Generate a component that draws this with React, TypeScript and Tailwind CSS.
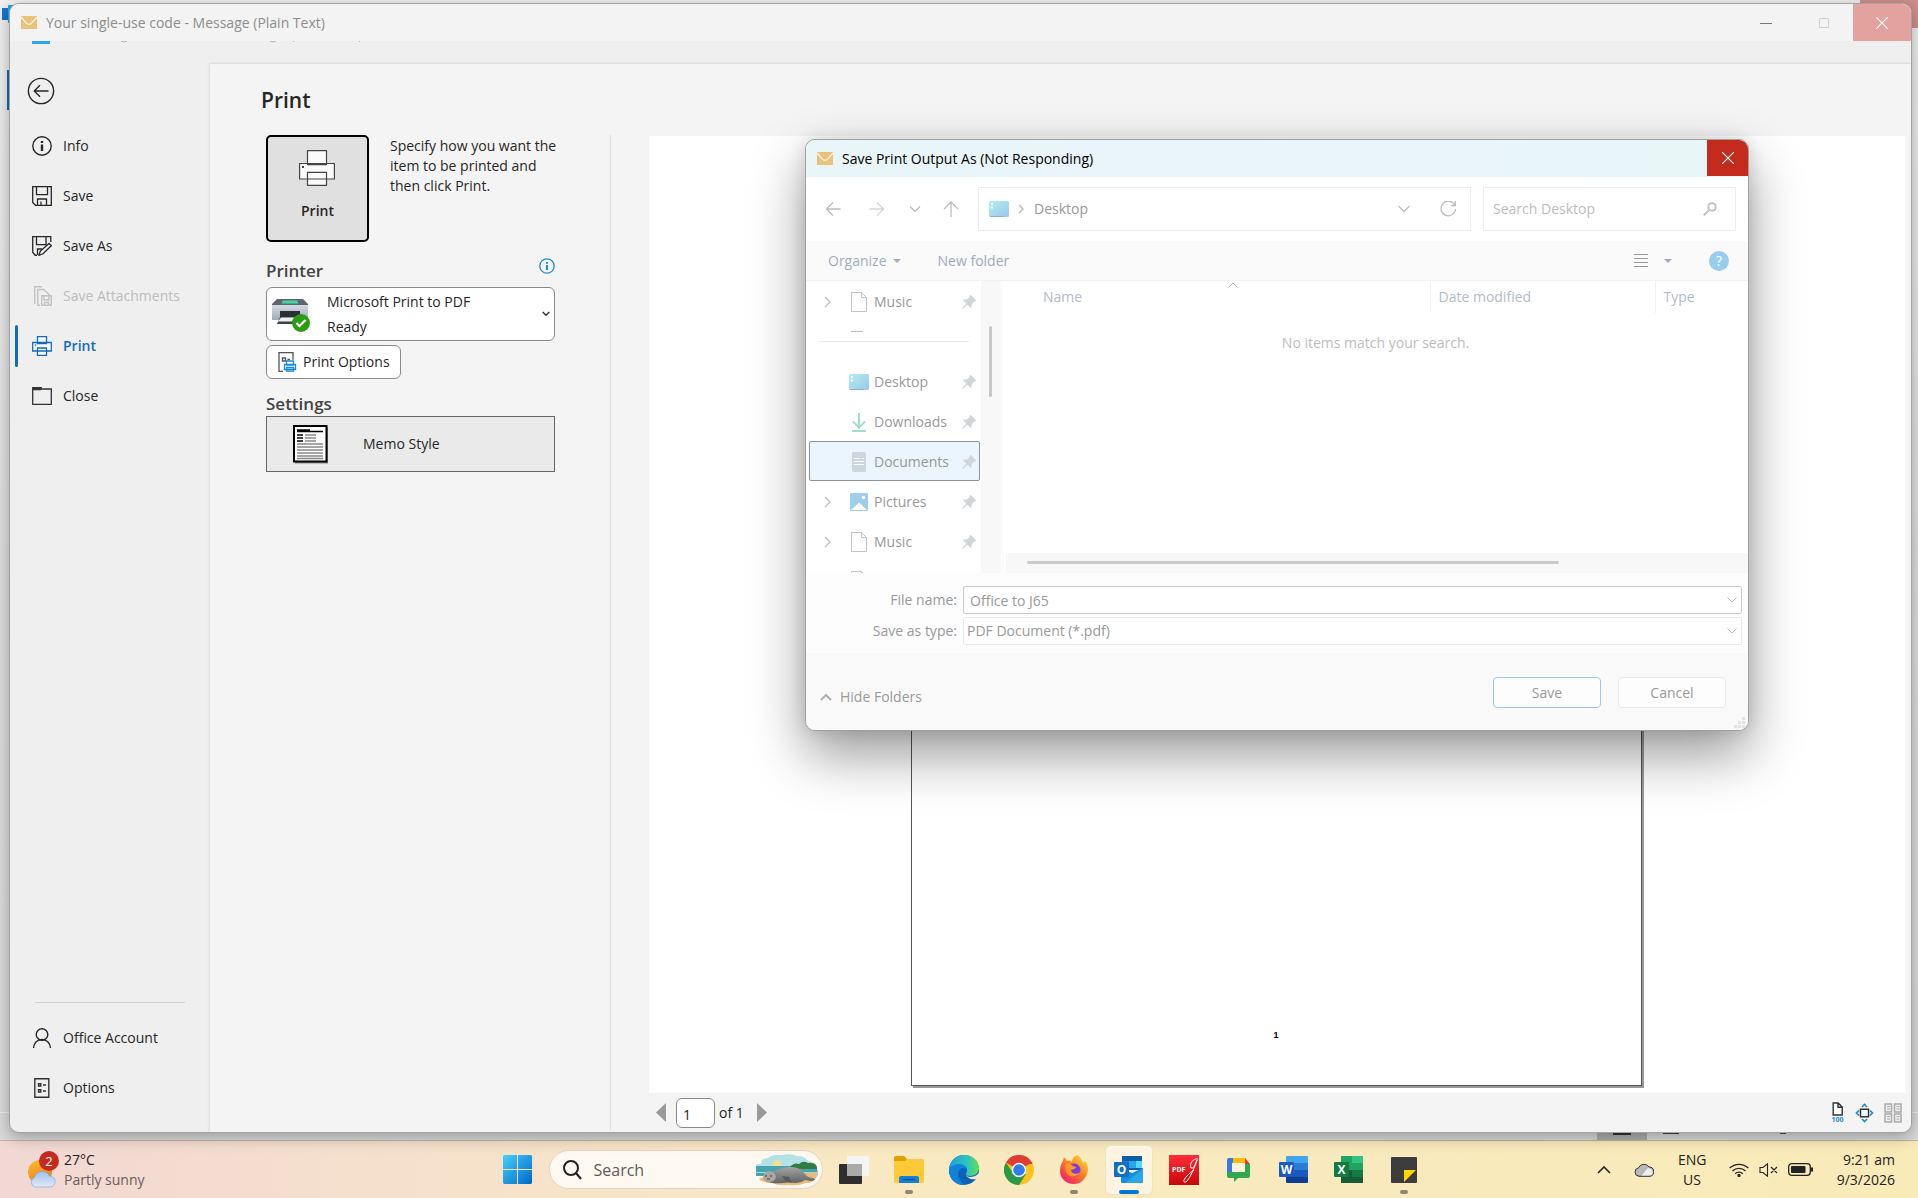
import type { ReactNode } from 'react';

const NAV_ITEMS = [
  { label: 'Info', icon: <InfoIcon /> },
  { label: 'Save', icon: <SaveIcon /> },
  { label: 'Save As', icon: <SaveAsIcon /> },
  { label: 'Save Attachments', icon: <SaveAttachmentsIcon />, disabled: true },
  { label: 'Print', icon: <PrinterIcon />, active: true },
  { label: 'Close', icon: <CloseFolderIcon /> },
];

const TREE_ITEMS = [
  { label: 'Desktop', icon: <DesktopIcon /> },
  { label: 'Downloads', icon: <DownloadsIcon /> },
  { label: 'Documents', icon: <DocumentsIcon />, selected: true },
  { label: 'Pictures', icon: <PicturesIcon />, expandable: true },
  { label: 'Music', icon: <FileIcon />, expandable: true },
];

const TASKBAR_APPS = [
  { label: 'Task View', icon: <TaskViewIcon /> },
  { label: 'File Explorer', icon: <ExplorerIcon />, running: true },
  { label: 'Edge', icon: <EdgeIcon /> },
  { label: 'Chrome', icon: <ChromeIcon /> },
  { label: 'Firefox', icon: <FirefoxIcon />, running: true },
  { label: 'Outlook', icon: <OutlookIcon />, focused: true },
  { label: 'PDF reader', icon: <PdfIcon /> },
  { label: 'Chat', icon: <ChatIcon /> },
  { label: 'Word', icon: <WordIcon /> },
  { label: 'Excel', icon: <ExcelIcon /> },
  { label: 'Sticky Notes', icon: <StickyIcon />, running: true },
];

export default function App() {
  return (
    <div className="relative flex h-screen flex-col overflow-hidden font-['Open_Sans','Noto_Sans',sans-serif] text-sm text-[#262626]">
      <div className="relative flex min-h-0 flex-1 bg-[#d9d9d9] pt-[3px] pr-[6px] pb-[7px] pl-[9px]">
        <BackgroundWindow />
        <main className="relative flex min-w-0 flex-1 flex-col overflow-hidden rounded-[10px] border border-[#a2a2a2] bg-[#efefef] shadow-[0_4px_16px_rgba(0,0,0,0.3)]">
          <TitleBar />
          <div className="flex min-h-0 flex-1">
            <Sidebar />
            <PrintPanel />
          </div>
        </main>
      </div>
      <SaveDialog />
      <Taskbar />
    </div>
  );
}

/* Slivers of the maximised window that sits behind the message */
function BackgroundWindow() {
  return (
    <div className="absolute inset-0 bg-linear-to-b from-[#f0f0f0] via-[#dedede] to-[#dadada]">
      <div className="absolute top-0 right-0 h-7 w-[58px] bg-[#cf8f8b]" />
      <div className="absolute top-2 left-[2px] h-3 w-3 bg-[#0f78d4]" />
      <div className="absolute top-[5px] left-2 h-[18px] w-2 bg-[#28a8ea]" />
      <div className="absolute top-[70px] left-[7px] h-10 w-1 bg-[#0f6cbd]" />
      <div className="absolute bottom-[27px] left-0 h-px w-full bg-[#f0f0f0]" />
      <div className="absolute right-[271px] bottom-0 h-8 w-[50px] bg-[#aeaeae]" />
      <div className="absolute right-[287px] bottom-[5px] h-2 w-[18px] bg-[#333]" />
      <div className="absolute right-[239px] bottom-[6px] h-2 w-4 bg-[#444]" />
      <div className="absolute right-[132px] bottom-[6px] h-2 w-[6px] bg-[#555]" />
    </div>
  );
}

function TitleBar() {
  return (
    <>
      <header className="flex h-[37px] shrink-0 items-center bg-[#f3f3f3] pl-[11px] text-[#8d8d8d]">
        <MailIcon />
        <span className="ml-[9px] flex-1">Your single-use code - Message (Plain Text)</span>
        <button aria-label="Minimize" className="flex h-full w-[58px] items-center justify-center">
          <svg width="12" height="12" fill="none" stroke="#777"><path d="M0 6.500h12" /></svg>
        </button>
        <button aria-label="Maximize" className="flex h-full w-[58px] items-center justify-center">
          <svg width="12" height="12" fill="none" stroke="#d0d0d0"><path d="M1.500 1.500h9v9h-9z" /></svg>
        </button>
        <button aria-label="Close" className="flex h-full w-[58px] items-center justify-center bg-[#e3a29d]">
          <CrossIcon />
        </button>
      </header>
      {/* leftover bottom edge of the old caption */}
      <svg width="360" height="3" className="ml-[22px] shrink-0" fill="none" stroke="#b5b5b5">
        <path d="M0 0h18v3H0z" fill="#28a8ea" stroke="none" />
        <path d="M89 0q3 2 6 0M238 0q3 2 6 0M261 0l1 1M328 0l-1 1" />
      </svg>
    </>
  );
}

function Sidebar() {
  return (
    <nav className="flex w-[200px] shrink-0 flex-col pt-[33px] text-[#262626]">
      <button aria-label="Back" className="ml-[17px] h-7 w-7">
        <svg width="28" height="28" fill="none" stroke="#262626" strokeWidth="1.4">
          <circle cx="14" cy="14" r="12.6" />
          <path d="M21.500 14H7.500M13 8.300 7.300 14l5.700 5.700" />
        </svg>
      </button>
      <div className="mt-4">
        {NAV_ITEMS.map(item => (
          <NavItem key={item.label} {...item} />
        ))}
      </div>
      <hr className="mt-auto mr-[25px] ml-[25px] border-[#d0d0d0]" />
      <div className="mt-[10px] mb-[19px]">
        <NavItem label="Office Account" icon={<AccountIcon />} />
        <NavItem label="Options" icon={<OptionsIcon />} />
      </div>
    </nav>
  );
}

function NavItem({ label, icon, active, disabled }: { label: string; icon: ReactNode; active?: boolean; disabled?: boolean }) {
  const tone = active ? 'font-semibold text-[#0f6cbd]' : disabled ? 'text-[#bdbdbd]' : '';
  return (
    <button disabled={disabled} className={`flex h-[50px] w-full items-center pl-[5px] ${tone}`}>
      <span className={`h-[42px] w-[3px] rounded-sm ${active ? 'bg-[#0f6cbd]' : ''}`} />
      <span className="ml-[14px]">{icon}</span>
      <span className="ml-[11px]">{label}</span>
    </button>
  );
}

function PrintPanel() {
  return (
    <section className="mt-5 flex min-w-0 flex-1 flex-col bg-[#f4f4f4] shadow-[0_0_3px_rgba(0,0,0,0.16)]">
      <h1 className="h-[71px] shrink-0 pt-[22px] pl-[51px] text-[21px] leading-7 font-semibold">Print</h1>
      <div className="flex min-h-0 flex-1">
        <div className="mb-[2px] w-[401px] shrink-0 border-r border-[#dcdcdc] pr-[55px] pl-14">
          <PrintSettings />
        </div>
        <Preview />
      </div>
    </section>
  );
}

function PrintSettings() {
  return (
    <>
      <div className="flex gap-[21px]">
        <button className="flex h-[107px] w-[103px] shrink-0 flex-col items-center rounded-[5px] border-2 border-black bg-[#e0e0e0] pt-[13px] font-semibold">
          <svg width="37" height="36" fill="#fafafa" stroke="#444" strokeWidth="1.2">
            <path d="M8.500.6h19v14h-19zM.6 13.500h34.800v15.500H.6zM8.500 22.400h19v13h-19z" />
            <path d="M3 16h2v2H3z" fill="#444" stroke="none" />
          </svg>
          <span className="mt-[15px] leading-5">Print</span>
        </button>
        <p className="w-[180px] pt-px leading-5 whitespace-nowrap">
          Specify how you want the<br />item to be printed and<br />then click Print.
        </p>
      </div>
      <div className="mt-4 mb-[3px] flex items-start justify-between">
        <h2 className="text-[17px] leading-[26px] font-semibold text-[#444]">Printer</h2>
        <button aria-label="Printer properties">
          <svg width="16" height="16" fill="none" stroke="#1a8ad6" strokeWidth="1.3">
            <circle cx="8" cy="8" r="7.200" />
            <path d="M8 7v5M8 4v1.800" strokeWidth="2" />
          </svg>
        </button>
      </div>
      <button aria-haspopup="listbox" className="flex h-[54px] w-full items-center rounded-md border border-[#8a8a8a] bg-white pl-[5px] text-left">
        <PrinterReadyIcon />
        <span className="ml-4 flex-1 leading-[25px]">Microsoft Print to PDF<br />Ready</span>
        <svg width="8" height="6" className="mr-1" fill="none" stroke="#333" strokeWidth="1.500"><path d="m.7 1 3.300 3.300L7.300 1" /></svg>
      </button>
      <button className="mt-1 flex h-[34px] w-[135px] items-center rounded-md border border-[#8a8a8a] bg-white pl-[11px] whitespace-nowrap">
        <PrintOptionsIcon />
        <span className="ml-[6px]">Print Options</span>
      </button>
      <h2 className="mt-3 -mb-px text-[17px] leading-[26px] font-semibold text-[#444]">Settings</h2>
      <button className="flex h-[56px] w-full items-center border border-[#666] bg-[#eaeaea] pl-[26px]">
        <MemoIcon />
        <span className="ml-[34px]">Memo Style</span>
      </button>
    </>
  );
}

function Preview() {
  return (
    <div className="mt-px mr-[5px] ml-[38px] flex min-w-0 flex-1 flex-col">
      <div className="flex min-h-0 flex-1 justify-center bg-white pt-2 pr-[3px] pb-[7px]">
        <div className="flex w-[731px] items-end justify-center border border-[#555] bg-white pb-11 font-['Liberation_Sans',sans-serif] text-[9px] leading-3 font-bold text-black shadow-[2px_2px_0_#999]">
          1
        </div>
      </div>
      <footer className="flex h-[39px] shrink-0 items-center pl-[7px]">
        <button aria-label="Previous page"><svg width="10" height="19" fill="#999"><path d="M10 0v19L0 9.500z" /></svg></button>
        <input aria-label="Page" defaultValue="1" className="ml-[10px] h-[30px] w-[39px] rounded-md border border-[#8a8a8a] bg-white pt-1 pl-[6px]" />
        <span className="ml-1">of 1</span>
        <button aria-label="Next page" className="ml-[13px]"><svg width="10" height="19" fill="#999"><path d="M0 0v19l10-9.500z" /></svg></button>
        <div className="mr-1 ml-auto flex items-center gap-[10px]">
          <button aria-label="Actual size">
            <svg width="14" height="22" fill="none" className="overflow-visible">
              <path d="M2.200 1h5l4 4v8h-9zM7 1v4.200h4" fill="#fafafa" stroke="#333" strokeWidth="1.400" />
              <text x="6.500" y="20" textAnchor="middle" className="text-[7px] font-bold" fill="#1a8ad6">100</text>
            </svg>
          </button>
          <button aria-label="One page">
            <svg width="19" height="20" fill="none" stroke="#1a8ad6" strokeWidth="1.700">
              <path d="M7 4 9.500 1.500 12 4M7 16l2.500 2.500L12 16M4 7.500 1.500 10 4 12.500M15 7.500l2.500 2.500-2.500 2.500" />
              <path d="M5.500 6.200h8v7.600h-8z" stroke="#333" strokeWidth="1.500" fill="#fafafa" />
            </svg>
          </button>
          <button aria-label="Multiple pages">
            <svg width="18" height="20" fill="#eee" stroke="#aaa" strokeWidth="1.500">
              <path d="M1 1h6.500v8H1zM10.500 1H17v8h-6.500zM1 11h6.500v8H1zM10.500 11H17v8h-6.500z" />
              <path d="M3 3.500h3M3 6h3M12.500 3.500h3M12.500 6h3M3 13.500h3M3 16h3M12.500 13.500h3M12.500 16h3" strokeWidth="1" />
            </svg>
          </button>
        </div>
      </footer>
    </div>
  );
}

/* ---------- Save dialog ---------- */

function SaveDialog() {
  return (
    <div
      role="dialog"
      aria-label="Save Print Output As"
      className="absolute top-[139px] left-[805px] flex w-[944px] flex-col overflow-hidden rounded-[10px] border border-[#a0a0a0] bg-white text-[#999] shadow-[0_24px_54px_rgba(0,0,0,0.4),0_0_16px_rgba(0,0,0,0.12)]"
    >
      <div className="flex h-[37px] items-center bg-linear-to-r from-[#e8f6f7] via-[#e9f4fb] to-[#e8f6f7] pl-[11px] text-black">
        <MailIcon />
        <span className="ml-[9px] flex-1">Save Print Output As (Not Responding)</span>
        <button aria-label="Close" className="flex h-9 w-[41px] items-center justify-center self-start bg-[#c42b1c]">
          <CrossIcon />
        </button>
      </div>

      <div className="flex h-16 items-center bg-white pr-3 pl-[5px]">
        <ToolButton label="Back" className="w-11"><path d="M15.500 8H1.500M8 1.500 1.500 8 8 14.500" /></ToolButton>
        <ToolButton label="Forward" className="w-11 opacity-60"><path d="M.5 8h14M8 1.500 14.500 8 8 14.500" /></ToolButton>
        <ToolButton label="Recent locations" className="w-8"><path d="m3 5.500 5 5 5-5" /></ToolButton>
        <ToolButton label="Up" className="w-10"><path d="M8 16V1.500M1 8l7-7 7 7" /></ToolButton>
        <div className="ml-[7px] flex h-[44px] flex-1 items-center border border-[#ededed] pl-[10px]">
          <DesktopIcon />
          <svg width="6" height="10" className="ml-[9px]" fill="none" stroke="#bbb" strokeWidth="1.500"><path d="m1 1 4 4-4 4" /></svg>
          <span className="ml-[10px] flex-1">Desktop</span>
          <ToolButton label="Previous locations" className="w-11"><path d="m2.500 5 5.500 5.500L13.500 5" /></ToolButton>
          <ToolButton label="Refresh" className="w-11"><path d="M15 4.500A7.300 7.300 0 1 0 15.600 8M15.300 0v4.700h-4.500" /></ToolButton>
        </div>
        <div className="ml-3 flex h-[44px] w-[253px] items-center border border-[#ededed] pr-[18px] pl-[9px]">
          <input aria-label="Search Desktop" placeholder="Search Desktop" className="min-w-0 flex-1 bg-transparent placeholder:text-[#bdbdbd]" />
          <svg width="14" height="14" fill="none" stroke="#c4c4c4" strokeWidth="2"><circle cx="9" cy="5" r="3.800" /><path d="M6 8 .8 13.200" /></svg>
        </div>
      </div>

      <div className="flex h-10 items-center border-b border-[#f2f2f2] bg-[#fafafa] pt-px pr-[19px] pl-[22px] text-[#a3abba]">
        <button className="flex items-center gap-[6px]">Organize<Triangle /></button>
        <button className="ml-[37px]">New folder</button>
        <button aria-label="View" className="ml-auto flex items-center gap-4">
          <svg width="14" height="14" stroke="#999"><path d="M0 .5h14M0 4.500h14M0 8.500h14M0 12.500h14" /></svg>
          <Triangle />
        </button>
        <button aria-label="Help" className="ml-[37px] flex h-5 w-5 items-center justify-center rounded-full bg-[#99cdef] text-white">?</button>
      </div>

      <div className="flex h-[292px]">
        <div className="w-[175px] shrink-0 overflow-hidden">
          <TreeRow label="Music" icon={<FileIcon />} expandable />
          {/* cut-off row above the separator */}
          <div className="h-10 pt-[10px]">
            <div className="ml-[45px] h-px w-3 bg-[#bbb]" />
            <hr className="mt-[9px] mr-3 ml-[13px] border-[#ebebeb]" />
          </div>
          {TREE_ITEMS.map(item => (
            <TreeRow key={item.label} {...item} />
          ))}
          <div className="pt-[10px] pl-[45px]"><FileIcon /></div>
        </div>
        <div className="w-5 shrink-0 bg-[#f8f8f8] pt-[45px]">
          <div className="ml-2 h-[71px] w-[3px] rounded-full bg-[#c8c8c8]" />
        </div>
        <div className="ml-px flex min-w-0 flex-1 flex-col border-l border-[#fafafa]">
          <table className="w-full table-fixed text-left text-[#b3bbc6]">
            <thead>
              <tr className="h-8">
                <th className="relative w-[427px] border-r border-[#f0f0f0] pl-10 font-normal">
                  <svg width="10" height="6" className="absolute top-px left-[225px]" fill="none" stroke="#bbb"><path d="m.5 5.500 4.500-4.500 4.500 4.500" /></svg>
                  Name
                </th>
                <th className="w-[225px] border-r border-[#f0f0f0] pl-2 font-normal">Date modified</th>
                <th className="pl-2 font-normal">Type</th>
              </tr>
            </thead>
            <tbody>
              <tr>
                <td colSpan={3} className="h-[60px] text-center text-[#bdbdbd]">No items match your search.</td>
              </tr>
            </tbody>
          </table>
          <div className="mt-auto ml-[3px] h-5 bg-[#f8f8f8] pt-2 pr-[189px] pl-[21px]">
            <div className="h-[3px] rounded-full bg-[#cbcbcb]" />
          </div>
        </div>
      </div>

      <div className="grid grid-cols-[151px_1fr] items-center gap-x-[6px] gap-y-[3px] bg-[#fdfdfd] pt-[13px] pr-[6px] pb-2">
        <label htmlFor="file-name" className="text-right">File name:</label>
        <div className="relative">
          <input id="file-name" defaultValue="Office to J65" className="h-7 w-full rounded-[2px] border border-[#cbcbcb] bg-white pl-[6px]" />
          <FieldChevron />
        </div>
        <label htmlFor="save-type" className="text-right">Save as type:</label>
        <div className="relative">
          <select id="save-type" className="h-7 w-full appearance-none rounded-[2px] border border-[#e8e8e8] bg-white pl-[3px]">
            <option>PDF Document (*.pdf)</option>
          </select>
          <FieldChevron />
        </div>
      </div>

      <div className="relative flex h-[77px] items-start bg-[#f9f9f9] pt-6 pr-[22px] pl-[14px]">
        <button className="flex h-10 items-center gap-2">
          <svg width="12" height="8" fill="none" stroke="#b0b0b0" strokeWidth="2"><path d="m1 7 5-5 5 5" /></svg>
          Hide Folders
        </button>
        <button className="ml-auto h-[31px] w-[108px] rounded-[4px] border border-[#99c9ec] bg-[#fdfdfd]">Save</button>
        <button className="ml-[17px] h-[31px] w-[108px] rounded-[4px] border border-[#ebebeb] bg-[#fdfdfd]">Cancel</button>
        <svg width="11" height="11" className="absolute right-[3px] bottom-[2px]" fill="#e2e2e2">
          <path d="M8 0h3v3H8zM4 4h3v3H4zM8 4h3v3H8zM0 8h3v3H0zM4 8h3v3H4zM8 8h3v3H8z" />
        </svg>
      </div>
    </div>
  );
}

function TreeRow({ label, icon, expandable, selected }: { label: string; icon: ReactNode; expandable?: boolean; selected?: boolean }) {
  return (
    <button className={`ml-[3px] flex h-10 w-[171px] items-center rounded-[2px] border pt-px ${selected ? 'border-[#8d9399] bg-[#eaf5fe]' : 'border-transparent'}`}>
      <span className="flex w-[35px] justify-center">
        {expandable && <svg width="7" height="12" fill="none" stroke="#c4c4c4" strokeWidth="1.500"><path d="m1 1 5 5-5 5" /></svg>}
      </span>
      <span className="ml-[3px] flex w-[22px] justify-center">{icon}</span>
      <span className="ml-1 flex-1 text-left">{label}</span>
      <svg width="14" height="14" className="mr-[3px]" fill="#cfd5d8" stroke="#cfd5d8"><path d="M8.500.8 13.300 5.500 11.500 6.200 9 9 8.700 12 2 5.200 5 5 8 2.700zM5.500 8.500 .5 13.500" strokeWidth="1.300" /></svg>
    </button>
  );
}

function ToolButton({ label, className, children }: { label: string; className: string; children: ReactNode }) {
  return (
    <button aria-label={label} className={`flex justify-center ${className}`}>
      <svg width="16" height="16" fill="none" stroke="#bdbdbd" strokeWidth="1.300">{children}</svg>
    </button>
  );
}

function FieldChevron() {
  return (
    <svg width="10" height="6" className="pointer-events-none absolute top-[11px] right-[5px]" fill="none" stroke="#bbb">
      <path d="m.5.500 4.500 4.500L9.500.500" />
    </svg>
  );
}

function Triangle() {
  return <svg width="8" height="4" fill="#a3abba"><path d="M0 0h8L4 4z" /></svg>;
}

function CrossIcon() {
  return <svg width="12" height="12" stroke="#fff" strokeWidth="1.100"><path d="m0 0 12 12M12 0 0 12" /></svg>;
}

/* ---------- Taskbar ---------- */

function Taskbar() {
  return (
    <footer className="grid h-[58px] shrink-0 grid-cols-[1fr_auto_1fr] border-t border-[#c9b3a4] bg-linear-to-r from-[#f2d8d4] from-0% via-[#f9e9c2] via-45% to-[#f9ebb8] pl-[3px] text-[#222]">
      <button className="flex items-center pl-[25px] text-left">
        <WeatherIcon />
        <span className="ml-1 leading-5">27°C<br /><span className="text-[#6b5d5b]">Partly sunny</span></span>
      </button>
      <div className="flex items-center">
        <button aria-label="Start" className="flex w-[55px] justify-center"><StartIcon /></button>
        <div className="mx-1 flex h-[39px] w-[274px] items-center rounded-full border border-[#e4d4c4] bg-[#fdf8f0] pr-1 pl-[13px]">
          <svg width="19" height="20" fill="none" stroke="#222" strokeWidth="2"><circle cx="8" cy="8" r="7" /><path d="m13 13 5 6" /></svg>
          <input aria-label="Search" placeholder="Search" className="ml-3 min-w-0 flex-1 bg-transparent text-base placeholder:text-[#5f5b58]" />
          <SealIcon />
        </div>
        {TASKBAR_APPS.map(app => (
          <TaskbarApp key={app.label} {...app} />
        ))}
      </div>
      <div className="flex items-center justify-end pr-[23px]">
        <button aria-label="Hidden icons"><svg width="14" height="8" fill="none" stroke="#222" strokeWidth="1.600"><path d="m1 7 6-6 6 6" /></svg></button>
        <button aria-label="OneDrive" className="ml-[23px]"><CloudIcon /></button>
        <button className="ml-6 w-7 text-center leading-5">ENG<br />US</button>
        <button aria-label="Network, volume and battery" className="ml-[23px] flex items-center gap-[10px]">
          <svg width="20" height="14" fill="none" stroke="#222" strokeWidth="1.300">
            <path d="M.7 5a13.500 13.500 0 0 1 18.600 0M3.500 8a9.500 9.500 0 0 1 13 0M6.200 10.700a5.500 5.500 0 0 1 7.600 0" />
            <circle cx="10" cy="12.500" r="1" fill="#222" />
          </svg>
          <svg width="19" height="14" fill="none" stroke="#222" strokeWidth="1.100">
            <path d="M1 4.500h3L8.500.8v12.400L4 9.500H1zM12 4l6 6M18 4l-6 6" />
          </svg>
          <svg width="25" height="13" fill="none" stroke="#222" strokeWidth="1.300">
            <rect x=".7" y=".7" width="21.600" height="11.600" rx="3" />
            <path d="M24 4.500v4" strokeWidth="2" />
            <rect x="3" y="3" width="14.500" height="7" rx="1" fill="#222" stroke="none" />
          </svg>
        </button>
        <button className="ml-5 w-[62px] text-right leading-5 whitespace-nowrap">9:21 am<br />9/3/2026</button>
      </div>
    </footer>
  );
}

function TaskbarApp({ label, icon, running, focused }: { label: string; icon: ReactNode; running?: boolean; focused?: boolean }) {
  return (
    <button aria-label={label} className="flex w-[55px] justify-center">
      <span className={`relative flex h-[50px] w-12 items-center justify-center rounded-md ${focused ? 'border border-[#f1e2c0] bg-[#fdf5e2]' : ''}`}>
        {icon}
        {running && <span className="absolute bottom-px h-1 w-2 rounded-full bg-[#8f8671]" />}
        {focused && <span className="absolute bottom-0 h-1 w-5 rounded-full bg-[#0078d4]" />}
      </span>
    </button>
  );
}

/* ---------- Icons ---------- */

function MailIcon() {
  return (
    <svg width="16" height="13" fill="#ecc17e"><path d="M0 0h16v13H0z" /><path d="m0 1 5.500 6.200q2.500 2.200 5 0L16 1" fill="none" stroke="#fbf3e3" strokeWidth="1.200" /></svg>
  );
}

function InfoIcon() {
  return (
    <svg width="20" height="20" fill="none" stroke="#262626" strokeWidth="1.400"><circle cx="10" cy="10" r="9.200" /><path d="M10 8.500V15M10 5v2" strokeWidth="2.400" /></svg>
  );
}

function SaveIcon() {
  return (
    <svg width="20" height="20" fill="none" stroke="#262626" strokeWidth="1.300"><path d="M.7.7h18.600v18.600H3.500L.7 16.500zM4.500.7v8h11v-8M5.500 19v-6h9v6M9 15.500V19" /></svg>
  );
}

function SaveAsIcon() {
  return (
    <svg width="20" height="20" fill="none" stroke="#262626" strokeWidth="1.300">
      <path d="M18.800 6V.7H.7v15.800l2.800 2.800M4.500.7v8h9.500v-8M5.500 19v-6H10" />
      <path d="m7 19.300 1.200-4L17 7.500l2.300 2.300-8.300 8zM2.500 19.300H5" />
    </svg>
  );
}

function SaveAttachmentsIcon() {
  return (
    <svg width="20" height="20" fill="none" stroke="#c4c4c4" strokeWidth="1.400">
      <path d="M10 .7H2.700V18M8 19.300H5.700V3.500h6L17.500 9" />
      <path d="M9.700 9.700h9.600v9.600H9.700zM12 10v4h5v-4M12.500 19v-2.500h4V19" />
    </svg>
  );
}

function PrinterIcon() {
  return (
    <svg width="20" height="20" fill="#fff" stroke="#0f6cbd" strokeWidth="1.300"><path d="M5.500.7h9v7h-9zM.7 6.500h18.600v8.500H.7zM5.500 12h9v7.300h-9z" /><path d="M2.800 9h1.500" /></svg>
  );
}

function CloseFolderIcon() {
  return (
    <svg width="20" height="20" fill="none" stroke="#333" strokeWidth="1.300"><path d="M.7 3h18.600v15.300H.7zM.7 3.700H8.500L9.500 2M.7 3V1.700h8.500V3" /></svg>
  );
}

function AccountIcon() {
  return (
    <svg width="20" height="20" fill="none" stroke="#262626" strokeWidth="1.400"><circle cx="10" cy="6.500" r="5.800" /><path d="M1.500 20a8.500 8.500 0 0 1 17 0" /></svg>
  );
}

function OptionsIcon() {
  return (
    <svg width="20" height="20" fill="none" stroke="#333" strokeWidth="1.400"><path d="M2.800.7h14v18.600h-14z" /><path d="M6.500 5.700h2.300V8H6.500zM6.500 11.700h2.300V14H6.500zM11 7h3M11 13h3" /></svg>
  );
}

function PrinterReadyIcon() {
  return (
    <svg width="39" height="36" viewBox="0 -2 39 36">
      <defs>
        <linearGradient id="body" x2="0" y2="1"><stop stopColor="#d3dae2" /><stop offset="1" stopColor="#9faab8" /></linearGradient>
      </defs>
      <path d="M5 1h26l5 5v2H0V6z" fill="#5f666d" />
      <path d="M11 2.500h14l1.500 3h-17z" fill="#43d9a0" />
      <path d="M0 7h36v15H0z" fill="url(#body)" />
      <path d="M8 13h20v7H8z" fill="#2c3034" />
      <path d="m8 19 20 0 2 7H5z" fill="#3c4146" />
      <path d="m9 19.500 15 0-2 4H6z" fill="#eef1f4" />
      <circle cx="29" cy="25" r="9" fill="#2b9c14" />
      <path d="m24.500 25 3 3 6-6" fill="none" stroke="#fff" strokeWidth="2.200" />
    </svg>
  );
}

function PrintOptionsIcon() {
  return (
    <svg width="19" height="20" fill="none" stroke="#555" strokeWidth="1.300">
      <path d="M5 19.300H1V.7h14v7M4.500 6h3v3h-3zM9.500 7.500H12" />
      <path d="M8.500 9h7v4h-7zM6.500 12.500h11v5h-11zM8.500 15.500h7v3.700h-7z" fill="#fff" stroke="#1a8ad6" />
    </svg>
  );
}

function MemoIcon() {
  return (
    <svg width="36" height="39" fill="none">
      <path d="M2 2h33v36.500H2z" fill="#888" />
      <path d="M1 1h32.500v35.500H1z" fill="#fff" stroke="#000" strokeWidth="2" />
      <path d="M4 5h13M4 6.500h26" stroke="#000" strokeWidth="1.500" />
      <path d="M4 10h6M4 13h6M4 16h6" stroke="#000" strokeWidth="1.500" />
      <path d="M12 10h11M12 13h11M12 16h11M4 19h26M4 22h26M4 25h26M4 28h26M4 31h26M4 33.500h26" stroke="#888" strokeWidth="1.400" />
    </svg>
  );
}

function DesktopIcon() {
  return (
    <svg width="20" height="16">
      <defs>
        <linearGradient id="desk" x2="1" y2="1"><stop stopColor="#b0f0f2" /><stop offset="1" stopColor="#9cc6ea" /></linearGradient>
      </defs>
      <rect width="20" height="16" rx="1.500" fill="url(#desk)" />
      <path d="M2 2h2v2H2zM2 5.500h2v2H2z" fill="#fff" />
      <path d="M1 15.500h14" stroke="#8fb3c9" />
    </svg>
  );
}

function DownloadsIcon() {
  return (
    <svg width="16" height="20" fill="none" stroke="#9fdfcb" strokeWidth="2"><path d="M8 1v14M2 9.500l6 6 6-6M1 19h14" /></svg>
  );
}

function DocumentsIcon() {
  return (
    <svg width="14" height="20"><rect width="14" height="20" rx="1.500" fill="#ccd6e2" /><path d="M2 6.500h6M2 9.500h10M2 12.500h10M9.500 6.500H12" stroke="#fff" /></svg>
  );
}

function PicturesIcon() {
  return (
    <svg width="18" height="18"><rect width="18" height="18" rx="1.500" fill="#9fcdec" /><path d="m1 17 8-7.500 8 7.500z" fill="#fff" /><circle cx="13.500" cy="4.500" r="1.700" fill="#fff" /></svg>
  );
}

function FileIcon() {
  return (
    <svg width="16" height="20" fill="#fdfdfd" stroke="#c4c4c4"><path d="M.5.500h10l5 5v14H.5zM10.500.500v5h5" /></svg>
  );
}

function WeatherIcon() {
  return (
    <svg width="32" height="38" viewBox="0 0 32 38">
      <defs>
        <linearGradient id="sun" x2="0.500" y2="1"><stop stopColor="#f4c430" /><stop offset="1" stopColor="#f27a1a" /></linearGradient>
        <linearGradient id="cloud" x2="0" y2="1"><stop stopColor="#9cc0f0" /><stop offset="1" stopColor="#dfeafa" /></linearGradient>
      </defs>
      <circle cx="12" cy="21" r="12" fill="url(#sun)" />
      <path d="M7 36a5 5 0 0 1-.5-9.500 8 8 0 0 1 15-1.500 5.500 5.500 0 0 1 .5 11z" fill="url(#cloud)" stroke="#7ba0dc" strokeWidth=".6" />
      <circle cx="21" cy="10" r="10" fill="#c42b1c" />
      <text x="21" y="15" textAnchor="middle" fill="#fff" className="text-[13px]">2</text>
    </svg>
  );
}

function StartIcon() {
  return (
    <svg width="29" height="29">
      <defs>
        <linearGradient id="win" x2="1" y2="1"><stop stopColor="#45d0fb" /><stop offset="1" stopColor="#0067c8" /></linearGradient>
      </defs>
      <path d="M1 0h13v14H0V1zM15 0h13l1 1v13H15zM0 15h14v14H1l-1-1zM15 15h14v13l-1 1H15z" fill="url(#win)" />
    </svg>
  );
}

function SealIcon() {
  return (
    <svg width="62" height="32" viewBox="0 0 62 32">
      <defs>
        <clipPath id="scene"><path d="M5 10Q5 4 12 4q5-4 13-3 9-2 16 1 8 0 11 5 9 1 9 8 2 6-1 9-2 5-10 5-8 3-18 2-10 1-16-2-9 0-13-4-6-3-4-6-5-4-2-8-1-1 3-1z" /></clipPath>
        <linearGradient id="seal" x2="0" y2="1"><stop stopColor="#a5a3a0" /><stop offset="1" stopColor="#5e6367" /></linearGradient>
      </defs>
      <g clipPath="url(#scene)">
        <path d="M0 0h62v12H0z" fill="#b4e2e6" />
        <circle cx="21" cy="11" r="4.500" fill="#fbe08a" />
        <path d="M0 12h62v10H0z" fill="#46a3b2" />
        <path d="M0 18h62v1H0z" fill="#a8dcd8" />
        <path d="M34 13q4-5 9-3 4-4 9-1 5-1 10 3v3H36z" fill="#2f7d43" />
        <path d="M0 26q14-6 30-6 18-2 32-1v13H0z" fill="#e9bb78" />
        <path d="M8 24q2-6 9-6 9-5 18-5 10 0 14 7 3 4 8 4l3 2-5 1-6-1q-4 3-11 3l-4-1q-9 2-18 1-8-1-8-5z" fill="url(#seal)" />
        <path d="m26 22 4 6 6 1-3-6z" fill="#555a5e" />
        <path d="M7 24q0-6 6-7 6 0 7 6-1 5-7 5-5 0-6-4z" fill="#a9a6a1" />
        <path d="M9 22h2M14 22h2M11 25h3" stroke="#444" />
      </g>
    </svg>
  );
}

function TaskViewIcon() {
  return (
    <svg width="30" height="28"><rect y="8" width="23" height="20" rx="1" fill="#2e2e2e" /><rect x="8" width="22" height="20" rx="1" fill="#f4f4f4" /><path d="M8 8h15v12H8z" fill="#aaa" /></svg>
  );
}

function ExplorerIcon() {
  return (
    <svg width="30" height="28">
      <path d="M0 2q0-2 2-2h8l3 3v4H0z" fill="#e0a000" />
      <path d="M0 5h11l2-2h15q2 0 2 2v20q0 2-2 2H2q-2 0-2-2z" fill="#fdc936" />
      <path d="M5 27v-5q0-2 2-2h16q2 0 2 2v5z" fill="#1280d8" />
      <path d="M9 23.500h12" stroke="#0a5290" strokeWidth="1.400" />
    </svg>
  );
}

function EdgeIcon() {
  return (
    <svg width="30" height="30">
      <defs>
        <linearGradient id="edgeTop" x2="1"><stop stopColor="#1f9fe0" /><stop offset=".6" stopColor="#2fc3c0" /><stop offset="1" stopColor="#62e04a" /></linearGradient>
      </defs>
      <circle cx="15" cy="15" r="15" fill="#0c62b8" />
      <path d="M0 14C1 5 8 0 15 0c9 0 15 6 15 13 0 5-4 8-9 8-3 0-4-1-4-2s1-2 1-4c0-3-3-5-7-5-5 0-9 2-11 4z" fill="url(#edgeTop)" />
      <path d="M0 14c2-3 6-5 10-5 5 0 8 3 8 6-1-1-2-2-4-2-3 0-5 3-5 6 0 6 5 10 9 11C8 32-1 24 0 14z" fill="#0f83d8" />
      <path d="M17 19c0 1 1 3 4 3s6-1 9-4v4l-3 2c-4 1-10-1-10-5z" fill="#fae8cf" />
    </svg>
  );
}

function ChromeIcon() {
  return (
    <svg width="30" height="30">
      <circle cx="15" cy="15" r="15" fill="#fcc31e" />
      <path d="M15 15 2 7.500A15 15 0 0 1 28 7.500z" fill="#e03c31" />
      <path d="M2 7.500A15 15 0 0 0 15 30l7-11-13-1z" fill="#2b9a48" />
      <path d="M15 8h13.200" stroke="#e03c31" strokeWidth="2" />
      <circle cx="15" cy="15" r="7.200" fill="#fff" />
      <circle cx="15" cy="15" r="5.800" fill="#2f7cf0" />
    </svg>
  );
}

function FirefoxIcon() {
  return (
    <svg width="30" height="30">
      <defs>
        <linearGradient id="fox" x1="1" y1="0" x2="0.200" y2="1"><stop stopColor="#fff04a" /><stop offset=".45" stopColor="#ff8a1f" /><stop offset="1" stopColor="#f0186c" /></linearGradient>
      </defs>
      <path d="M18 0c4 3 5 5 6 8l2-2c3 4 4 8 2 13-2 6-7 10-13 10C7 29 1 23 1 16c0-4 1-7 3-10l1-4 3 4c2-1 4 0 5 1 0-3 2-6 5-7z" fill="url(#fox)" />
      <circle cx="15" cy="15" r="6.500" fill="#7a3be0" />
      <path d="M6 9c3-1 6 0 8 2l3 1c0 2-3 2-5 3 0 4 6 5 9 2-2 6-13 6-14-1-1-3 0-5-1-7z" fill="#ff9a1e" />
    </svg>
  );
}

function OutlookIcon() {
  return (
    <svg width="30" height="28">
      <path d="M8 0h20v14H8z" fill="#0a5ea8" />
      <path d="M8 5h7v7H8z" fill="#1382d4" /><path d="M15 5h7v7h-7z" fill="#28a8ea" /><path d="M22 5h6v7h-6z" fill="#50d9ff" />
      <path d="m7 12 11 5 11-5v14q0 1-1 1H8q-1 0-1-1z" fill="#1490df" />
      <path d="m29 13-18 14h17q1 0 1-1z" fill="#28a8ea" />
      <rect y="6" width="15" height="15" rx="1" fill="#0f6fc6" />
      <text x="7.500" y="18" textAnchor="middle" fill="#fff" className="text-[12px] font-bold">O</text>
    </svg>
  );
}

function PdfIcon() {
  return (
    <svg width="30" height="30">
      <defs>
        <linearGradient id="pdf" x2="0" y2="1"><stop stopColor="#ff2b3a" /><stop offset="1" stopColor="#c80808" /></linearGradient>
      </defs>
      <path d="M0 0h30v30H0z" fill="url(#pdf)" />
      <text x="3" y="17" fill="#fff" className="text-[7px] font-bold">PDF</text>
      <path d="M29 4c-5-1-9 5-7 9 3 1 5-5 6-8-3 8-6 17-11 22-4 1-3-4 8-12" fill="none" stroke="#fff" />
    </svg>
  );
}

function ChatIcon() {
  return (
    <svg width="24" height="24">
      <path d="M5 0h14v5H5z" fill="#fbbc04" /><path d="M0 2q0-2 2-2h4v14H0z" fill="#3b78e7" />
      <path d="M18 0v6h5z" fill="#e4382c" />
      <path d="M18 6h5v12q0 2-2 2H11l-4 4v-4H2q-2 0-2-2v-4h18z" fill="#2fa84f" />
      <path d="M5 5h13v9H5z" fill="#fdf3dc" />
    </svg>
  );
}

function WordIcon() {
  return (
    <svg width="30" height="28">
      <path d="M8 0h20q1 0 1 1v6H7V1q0-1 1-1z" fill="#41a5ee" /><path d="M7 7h22v7H7z" fill="#2b7cd3" /><path d="M7 14h22v7H7z" fill="#185abd" /><path d="M7 21h22v5q0 1-1 1H8q-1 0-1-1z" fill="#103f91" />
      <rect y="6" width="15" height="15" rx="1" fill="#185abd" />
      <text x="7.500" y="18" textAnchor="middle" fill="#fff" className="text-[12px] font-bold">W</text>
    </svg>
  );
}

function ExcelIcon() {
  return (
    <svg width="30" height="28">
      <path d="M7 0h11v14H7z" fill="#21a366" /><path d="M18 0h11v7H18z" fill="#33c481" /><path d="M18 7h11v7H18z" fill="#21a366" /><path d="M7 14h11v7H7z" fill="#185c37" /><path d="M18 14h11v7H18z" fill="#107c41" /><path d="M7 21h22v6H7z" fill="#185c37" />
      <rect y="6" width="15" height="15" rx="1" fill="#107c41" />
      <text x="7.500" y="18" textAnchor="middle" fill="#fff" className="text-[12px] font-bold">X</text>
    </svg>
  );
}

function StickyIcon() {
  return (
    <svg width="26" height="26"><rect width="26" height="26" rx="1" fill="#3c3c3c" /><path d="M13 13h12L13 25z" fill="#ffd400" /></svg>
  );
}

function CloudIcon() {
  return (
    <svg width="20" height="14"><path d="M5 13.300A4.300 4.300 0 0 1 4.500 4.800 6 6 0 0 1 15 4a4.700 4.700 0 0 1 1 9.300z" fill="#b8b8b8" stroke="#333" /><path d="M7.500 12.500 14 5q5 1 4.500 5-.5 2.500-3 2.600z" fill="#eee" /></svg>
  );
}
